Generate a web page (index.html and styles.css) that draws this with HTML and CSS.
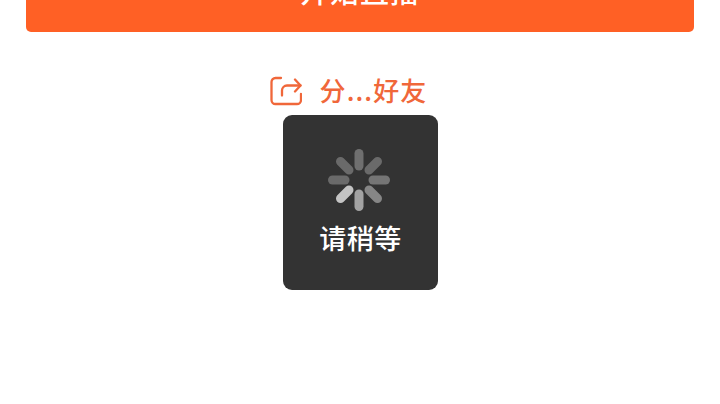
FILE: index.html
```html
<!DOCTYPE html>
<html lang="zh-CN">

<head>
    <meta charset="UTF-8">
    <meta name="viewport" content="width=device-width, initial-scale=1.0">

    <link rel="stylesheet" href="styles.css">
    <title>开始直播</title>
</head>

<body>

    <div class="page">
        <button class="start">开始直播</button>

        <div class="share">
            <svg class="share-icon" width="32" height="30" viewBox="0 0 32 30" fill="none" stroke="#f0673a" stroke-width="2.3" stroke-linecap="round" stroke-linejoin="round">
                <path d="M11 2H5.500a4 4 0 0 0-4 4v18a4 4 0 0 0 4 4h21.500a4 4 0 0 0 4-4v-6"/>
                <path d="M12 19.500v-5a5 5 0 0 1 5-5h13.500"/>
                <path d="M25 3.500l5.500 6l-5.500 6"/>
            </svg>
            <span class="share-text">分...好友</span>
        </div>
    </div>

    <!-- toast -->
    <div class="toast">
        <svg class="spinner" width="62" height="62" viewBox="-31 -31 62 62" stroke-width="9" stroke-linecap="round">
            <line x1="0" y1="-14" x2="0" y2="-26.500" stroke="#6f6f6f"/>
            <line x1="10" y1="-10" x2="18.500" y2="-18.500" stroke="#6a6a6a"/>
            <line x1="14" y1="0" x2="26.500" y2="0" stroke="#757575"/>
            <line x1="10" y1="10" x2="18.500" y2="18.500" stroke="#868686"/>
            <line x1="0" y1="14" x2="0" y2="26.500" stroke="#a3a3a3"/>
            <line x1="-10" y1="10" x2="-18.500" y2="18.500" stroke="#c4c4c4"/>
            <line x1="-14" y1="0" x2="-26.500" y2="0" stroke="#6a6a6a"/>
            <line x1="-10" y1="-10" x2="-18.500" y2="-18.500" stroke="#6a6a6a"/>
        </svg>
        <p class="toast-text">请稍等</p>
    </div>

</body>

</html>
```

FILE: styles.css
```css
html, body {
    margin: 0;
    height: 100%;
    overflow: hidden;
    background-color: #fff;
    font-family: "Noto Sans CJK SC", "Liberation Sans", sans-serif;
}

.page {
    padding: 0 26px;
}

.start {
    display: block;
    width: 100%;
    height: 88px;
    margin-top: -56px;
    padding: 4px 0 0;
    border: 0;
    border-radius: 5px;
    background-color: #ff6025;
    color: #fff;
    font-family: inherit;
    font-size: 29px;
    font-weight: 500;
    letter-spacing: 1px;
    line-height: 42px;
}

.share {
    display: flex;
    justify-content: center;
    align-items: center;
    gap: 18px;
    margin-top: 44px;
    margin-right: 23px;
    height: 30px;
}

.share-text {
    color: #f0673a;
    font-size: 26px;
    font-weight: 500;
    letter-spacing: 1.1px;
    line-height: 30px;
    margin-top: -2px;
}

.toast {
    position: absolute;
    left: 283px;
    top: 115px;
    width: 155px;
    height: 175px;
    border-radius: 9px;
    background-color: #333;
    display: flex;
    flex-direction: column;
    align-items: center;
}

.spinner {
    margin-top: 34px;
    margin-right: 4px;
}

.toast-text {
    margin: 9px 0 0;
    color: #fff;
    font-size: 27px;
    font-weight: 500;
    letter-spacing: 0.5px;
    line-height: 36px;
}
```
